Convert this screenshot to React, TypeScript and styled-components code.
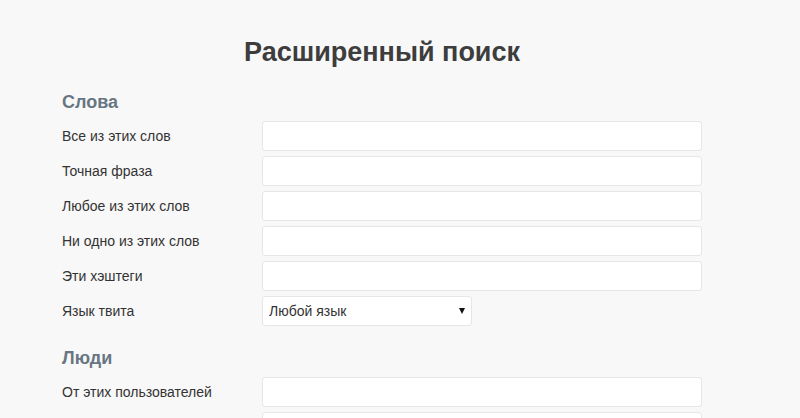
import React from "react";
import styled, { createGlobalStyle } from "styled-components";

const Global = createGlobalStyle`
  html, body { margin: 0; padding: 0; background: #f8f8f8; }
  body { font-family: "Liberation Sans", Arial, sans-serif; color: #333; }
`;

const Page = styled.div`
  width: 800px;
  height: 418px;
  overflow: hidden;
  box-sizing: border-box;
  padding: 37px 0 0 62px;
`;

const Container = styled.div`
  width: 640px;
`;

const Title = styled.h1`
  margin: 0 0 25px;
  font-size: 27px;
  line-height: 30px;
  font-weight: bold;
  color: #3d3d3d;
  text-align: center;
`;

const SectionTitle = styled.h2<{ $first?: boolean }>`
  margin: ${(p) => (p.$first ? "0" : "22px")} 0 9px;
  font-size: 18px;
  line-height: 20px;
  font-weight: bold;
  color: #687683;
`;

const Rows = styled.div`
  display: flex;
  flex-direction: column;
  gap: 5px;
`;

const Row = styled.div`
  display: grid;
  grid-template-columns: 200px 1fr;
  align-items: center;
  height: 30px;
`;

const Label = styled.label`
  font-size: 14px;
  color: #333;
`;

const Input = styled.input`
  box-sizing: border-box;
  width: 440px;
  height: 30px;
  border: 1px solid #e6e6e6;
  border-radius: 3px;
  background: #fff;
  padding: 0 8px;
  font-family: inherit;
  font-size: 14px;
  outline: none;
`;

const SelectWrap = styled.div`
  position: relative;
  width: 210px;
  height: 30px;
  &::after {
    content: "";
    position: absolute;
    right: 7px;
    top: 12px;
    border-left: 3.5px solid transparent;
    border-right: 3.5px solid transparent;
    border-top: 6px solid #111;
    pointer-events: none;
  }
`;

const Select = styled.select`
  appearance: none;
  -webkit-appearance: none;
  box-sizing: border-box;
  width: 100%;
  height: 30px;
  border: 1px solid #e6e6e6;
  border-radius: 3px;
  background: #fff;
  padding: 0 6px;
  font-family: inherit;
  font-size: 14px;
  color: #333;
  outline: none;
`;

const wordFields = [
  "Все из этих слов",
  "Точная фраза",
  "Любое из этих слов",
  "Ни одно из этих слов",
  "Эти хэштеги",
];

const peopleFields = ["От этих пользователей", "Этим пользователям"];

export default function App() {
  return (
    <>
      <Global />
      <Page>
        <Container>
          <Title>Расширенный поиск</Title>
          <SectionTitle $first>Слова</SectionTitle>
          <Rows>
            {wordFields.map((f) => (
              <Row key={f}>
                <Label>{f}</Label>
                <Input type="text" />
              </Row>
            ))}
            <Row>
              <Label>Язык твита</Label>
              <SelectWrap>
                <Select defaultValue="any">
                  <option value="any">Любой язык</option>
                </Select>
              </SelectWrap>
            </Row>
          </Rows>
          <SectionTitle>Люди</SectionTitle>
          <Rows>
            {peopleFields.map((f) => (
              <Row key={f}>
                <Label>{f}</Label>
                <Input type="text" />
              </Row>
            ))}
          </Rows>
        </Container>
      </Page>
    </>
  );
}
